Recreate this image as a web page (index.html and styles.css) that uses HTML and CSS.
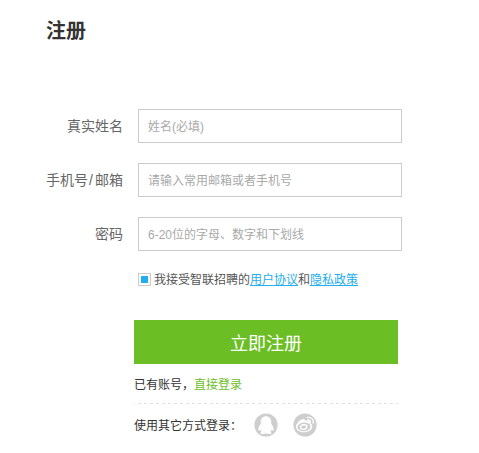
FILE: index.html
```html
<!DOCTYPE html>
<html lang="zh-CN">
<head>
<meta charset="utf-8">
<title>注册</title>
<link rel="stylesheet" href="styles.css">
</head>
<body>
<main class="page">
  <h1 class="title">注册</h1>
  <form class="form">
    <div class="row">
      <label class="label" for="name">真实姓名</label>
      <input class="field" id="name" type="text" placeholder="姓名(必填)">
    </div>
    <div class="row">
      <label class="label" for="account">手机号<span class="slash">/</span>邮箱</label>
      <input class="field" id="account" type="text" placeholder="请输入常用邮箱或者手机号">
    </div>
    <div class="row">
      <label class="label" for="password">密码</label>
      <input class="field" id="password" type="text" placeholder="6-20位的字母、数字和下划线">
    </div>
    <div class="agree">
      <span class="check"></span>
      <span class="agree-text">我接受智联招聘的<a class="link" href="#">用户协议</a>和<a class="link" href="#">隐私政策</a></span>
    </div>
    <div class="actions">
      <button class="submit" type="button">立即注册</button>
      <p class="login">已有账号，<a class="login-link" href="#">直接登录</a></p>
      <svg class="divider" width="264" height="1"><path d="M0 .5H264" stroke="#e0e0e0" stroke-dasharray="3 3" stroke-dashoffset="2"/></svg>
      <div class="other">
        <span class="other-text">使用其它方式登录：</span>
        <svg class="icon" viewBox="0 0 24 24">
          <circle cx="12" cy="12" r="11.600" fill="#cecece"/>
          <path fill="#fff" d="M12 3.200c-3.300 0-5.200 2.500-5.200 5.600v2c-1.400 1.900-2.700 4.300-2.500 6.300.1.900 1.100.5 2-.7.3 1 .8 1.900 1.500 2.500-1.100.4-1.500.9-1.400 1.400.2 1.100 4.300.9 5.600-.1 1.300 1 5.400 1.200 5.600.1.100-.5-.3-1-1.400-1.400.7-.6 1.200-1.500 1.500-2.500.9 1.200 1.900 1.600 2 .7.2-2-1.100-4.400-2.500-6.300v-2c0-3.100-1.900-5.600-5.200-5.600z"/>
        </svg>
        <svg class="icon" viewBox="0 0 24 24">
          <circle cx="12" cy="12" r="11.600" fill="#cecece"/>
          <path fill="#fff" d="M10 6.100c1.500-.5 2.400.3 2.100 1.800 2.900-.9 5-.3 4.600 2 2 .7 2.900 2 2.600 3.900-.5 3.200-4 5.500-8.300 5.500-4.500 0-8-2.100-8-5.500 0-3 3.700-6.900 7-7.700z"/>
          <ellipse cx="11" cy="13.900" rx="6.600" ry="4.300" fill="#cecece" transform="rotate(-5 11 13.900)"/>
          <ellipse cx="10.700" cy="14" rx="3.900" ry="3" fill="#fff" transform="rotate(-10 10.700 14)"/>
          <ellipse cx="10.600" cy="14.100" rx="2.400" ry="1.600" fill="#cecece" transform="rotate(-10 10.600 14.100)"/>
          <path fill="none" stroke="#fff" stroke-width="1.300" stroke-linecap="round" d="M14.300 4.400c4-.7 6.700 2 5.900 5.700M14.600 7c1.900-.2 3 .9 2.700 2.600"/>
        </svg>
      </div>
    </div>
  </form>
</main>
</body>
</html>
```
FILE: styles.css
```css
* {
  box-sizing: border-box;
}
body {
  margin: 0;
  background: #fff;
  color: #333;
  font: 12px/18px "Liberation Sans", "Noto Sans CJK SC", sans-serif;
}
.page {
  height: 453px;
  padding-top: 16px;
  overflow: hidden;
}
.title {
  margin: 0 0 63px 46px;
  font-size: 20px;
  line-height: 30px;
  font-weight: bold;
}
.row {
  display: flex;
  align-items: center;
  height: 34px;
  margin-bottom: 20px;
}
.label {
  width: 123px;
  margin-right: 15px;
  color: #666;
  font-size: 14px;
  text-align: right;
}
.slash {
  padding: 0 2px 0 1px;
}
.field {
  width: 264px;
  height: 34px;
  padding: 2px 10px 0 9px;
  border: 1px solid #ccc;
  border-radius: 0;
  outline: none;
  background: #fff;
  color: #333;
  font: inherit;
}
.field::placeholder {
  color: #a9a9a9;
  opacity: 1;
}
.agree {
  display: flex;
  align-items: flex-start;
  height: 18px;
  margin: 0 0 31px 138px;
  color: #555;
}
.check {
  width: 13px;
  height: 13px;
  margin: 2px 3px 0 0;
  padding: 2px;
  border: 1px solid #ccc;
  background: #22aeea content-box;
}
.link {
  color: #22aeea;
  text-decoration: underline;
  text-underline-offset: 1px;
}
.actions {
  width: 264px;
  margin-left: 134px;
}
.submit {
  display: block;
  width: 264px;
  height: 44px;
  padding: 0;
  border: 0;
  background: #6cbe25;
  color: #fff;
  font: 18px/44px "Noto Sans CJK SC", sans-serif;
}
.login {
  margin: 12px 0 9px;
}
.login-link {
  color: #6cbe25;
  text-decoration: none;
}
.divider {
  display: block;
}
.other {
  display: flex;
  align-items: center;
  height: 24px;
  margin-top: 9px;
}
.other-text {
  width: 120px;
  padding-top: 2px;
}
.icon {
  width: 24px;
  height: 24px;
  margin-right: 15px;
}
```
